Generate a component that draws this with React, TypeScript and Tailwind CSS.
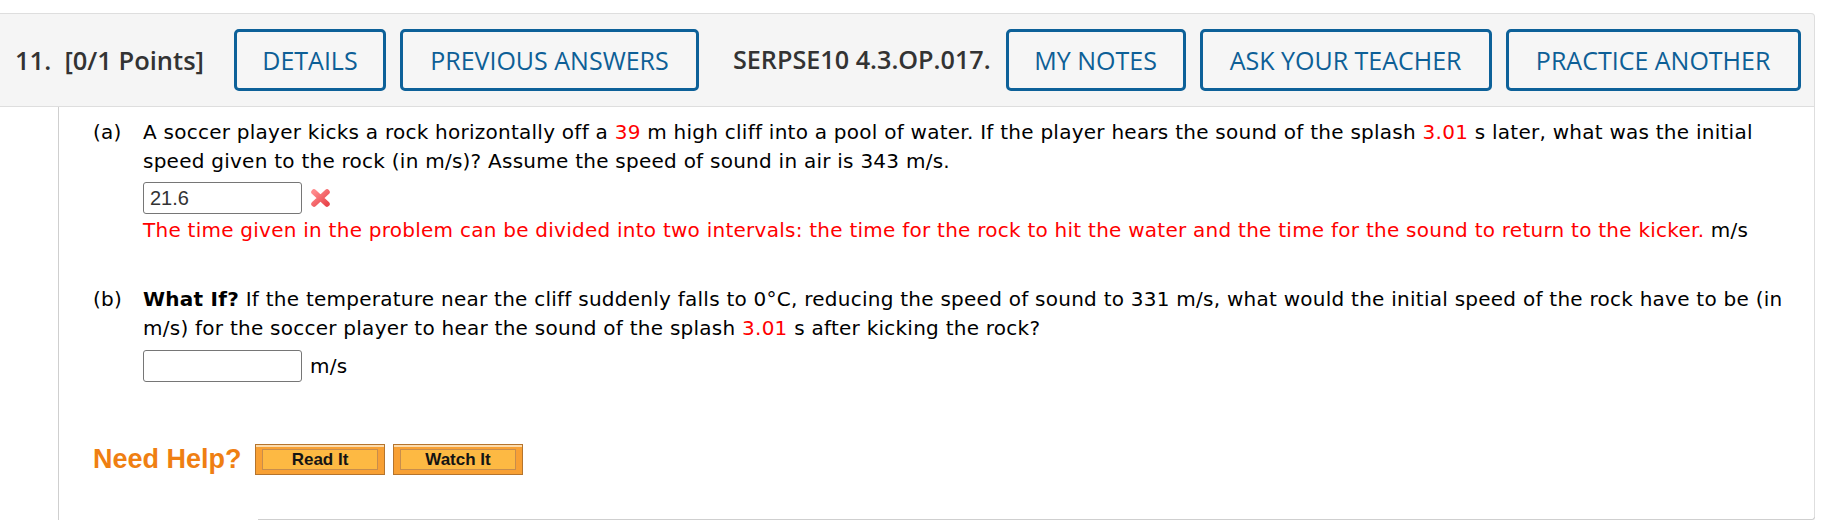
import React from "react";

const headerFont = { fontFamily: '"Open Sans", "Liberation Sans", sans-serif' };
const bodyFont = { fontFamily: '"DejaVu Sans", Verdana, sans-serif' };
const arial = { fontFamily: '"Liberation Sans", Arial, sans-serif' };

function HeaderButton({ label, w }: { label: string; w: string }) {
  return (
    <button
      className={`h-[62px] ${w} shrink-0 rounded-[5px] border-[3px] border-[#0d6199] bg-[#f6f6f6] text-[25px] font-medium leading-none text-[#0d5f96]`}
      style={headerFont}
    >
      {label}
    </button>
  );
}

function WrongMark() {
  return (
    <svg width="21" height="20" viewBox="0 0 21 20" className="shrink-0">
      <defs>
        <linearGradient id="xg" x1="0" y1="0" x2="1" y2="1">
          <stop offset="0" stopColor="#ff8a8c" />
          <stop offset="1" stopColor="#e9474c" />
        </linearGradient>
      </defs>
      <path d="M4 4 L17 16 M17 4 L4 16" stroke="url(#xg)" strokeWidth="5.5" strokeLinecap="round" fill="none" />
    </svg>
  );
}

function HelpButton({ label }: { label: string }) {
  return (
    <div className="h-[31px] w-[130px] border border-[#b5742d] bg-[#f8a034] px-[6px] pt-[4px] pb-[4px] shadow-[inset_0_2px_0_#fcdcae]">
      <div
        className="flex h-full items-center justify-center border border-[#c88d4c] bg-[#fdb943] text-[17px] font-bold leading-none text-[#141414]"
        style={arial}
      >
        {label}
      </div>
    </div>
  );
}

export default function App() {
  return (
    <div className="h-[520px] w-[1836px] overflow-hidden bg-white">
      <div className="flex h-full w-[1815px] flex-col pt-[13px]">
        {/* Header */}
        <div className="flex h-[94px] shrink-0 items-center rounded-tr-[4px] border-y border-r border-[#dedede] bg-[#f5f5f5] pl-[15px]">
          <span className="text-[25.5px] font-semibold text-[#333]" style={headerFont}>
            11.&nbsp;&nbsp;[0/1 Points]
          </span>
          <div className="ml-[30px] flex items-center gap-[14px]">
            <HeaderButton label="DETAILS" w="w-[152px]" />
            <HeaderButton label="PREVIOUS ANSWERS" w="w-[299px]" />
            <span className="ml-[20px] mr-[1px] text-[25.2px] font-semibold text-[#333]" style={headerFont}>
              SERPSE10 4.3.OP.017.
            </span>
            <HeaderButton label="MY NOTES" w="w-[180px]" />
            <HeaderButton label="ASK YOUR TEACHER" w="w-[292px]" />
            <HeaderButton label="PRACTICE ANOTHER" w="w-[295px]" />
          </div>
        </div>

        {/* Body */}
        <div className="flex min-h-0 flex-1">
          <div className="w-[58px] shrink-0" />
          <div className="flex flex-1 flex-col border-l border-[#cfcfcf]">
            <div
              className="flex-1 border-r border-[#dedede] pl-[34px] pt-[11px] text-[20px] leading-[29px] tracking-[0.25px] text-black"
              style={bodyFont}
            >
              {/* Part a */}
              <div className="flex">
                <span className="w-[50px] shrink-0">(a)</span>
                <div className="flex flex-col">
                  <p className="whitespace-nowrap">
                    A soccer player kicks a rock horizontally off a <span className="text-[#ff0000]">39</span> m high cliff into a pool of water. If the player hears the sound of the splash <span className="text-[#ff0000]">3.01</span> s later, what was the initial
                    <br />
                    speed given to the rock (in m/s)? Assume the speed of sound in air is 343 m/s.
                  </p>
                  <div className="mt-[6px] flex items-center gap-[8px]">
                    <div
                      className="flex h-[32px] w-[159px] items-center rounded-[3px] border border-[#767676] px-[6px] text-[20px] tracking-normal text-[#333]"
                      style={arial}
                    >
                      21.6
                    </div>
                    <WrongMark />
                  </div>
                  <p className="mt-[2px] whitespace-nowrap">
                    <span className="text-[#ff0000]">
                      The time given in the problem can be divided into two intervals: the time for the rock to hit the water and the time for the sound to return to the kicker.
                    </span>{" "}
                    m/s
                  </p>
                </div>
              </div>

              {/* Part b */}
              <div className="mt-[40px] flex">
                <span className="w-[50px] shrink-0">(b)</span>
                <div className="flex flex-col">
                  <p className="whitespace-nowrap">
                    <b>What If?</b> If the temperature near the cliff suddenly falls to 0°C, reducing the speed of sound to 331 m/s, what would the initial speed of the rock have to be (in
                    <br />
                    m/s) for the soccer player to hear the sound of the splash <span className="text-[#ff0000]">3.01</span> s after kicking the rock?
                  </p>
                  <div className="mt-[7px] flex items-center gap-[8px]">
                    <div className="h-[32px] w-[159px] rounded-[3px] border border-[#767676]" />
                    <span>m/s</span>
                  </div>
                </div>
              </div>

              {/* Need help */}
              <div className="mt-[62px] flex items-center tracking-normal">
                <span className="w-[162px] shrink-0 text-[27px] font-bold leading-none text-[#ef7f12]" style={arial}>
                  Need Help?
                </span>
                <div className="flex gap-[8px]">
                  <HelpButton label="Read It" />
                  <HelpButton label="Watch It" />
                </div>
              </div>
            </div>
            <div className="flex h-[3px] shrink-0">
              <div className="w-[199px] shrink-0" />
              <div className="flex-1 rounded-br-[4px] border-r border-b border-[#cfcfcf]" />
            </div>
          </div>
        </div>
      </div>
    </div>
  );
}
